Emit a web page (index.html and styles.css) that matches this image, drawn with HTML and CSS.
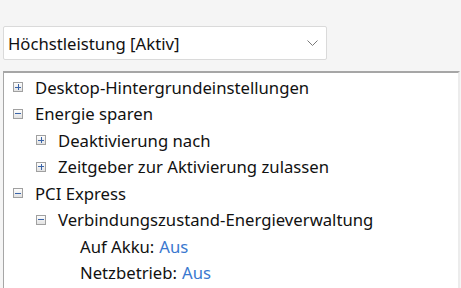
FILE: index.html
```html
<!DOCTYPE html>
<html lang="de">
<head>
    <meta charset="UTF-8">
    <title>Energieoptionen</title>
    <link rel="stylesheet" href="styles.css">
</head>
<body>
    <div class="plan-select">
        <span class="plan-name">Höchstleistung [Aktiv]</span>
        <svg class="chevron" width="11" height="7" viewBox="0 0 11 7">
            <path d="M0.5 0.5 L5.5 5.5 L10.5 0.5" fill="none" stroke="#7a7a7a" stroke-width="1"/>
        </svg>
    </div>

    <div class="tree">
        <div class="node">
            <span class="toggle plus"></span>
            <span class="label">Desktop-Hintergrundeinstellungen</span>
        </div>
        <div class="node">
            <span class="toggle minus"></span>
            <span class="label">Energie sparen</span>
        </div>
        <div class="node level-2">
            <span class="toggle plus"></span>
            <span class="label">Deaktivierung nach</span>
        </div>
        <div class="node level-2">
            <span class="toggle plus"></span>
            <span class="label">Zeitgeber zur Aktivierung zulassen</span>
        </div>
        <div class="node">
            <span class="toggle minus"></span>
            <span class="label">PCI Express</span>
        </div>
        <div class="node level-2">
            <span class="toggle minus"></span>
            <span class="label">Verbindungszustand-Energieverwaltung</span>
        </div>
        <div class="node leaf">
            <span class="label">Auf Akku:</span>
            <span class="value">Aus</span>
        </div>
        <div class="node leaf">
            <span class="label">Netzbetrieb:</span>
            <span class="value">Aus</span>
        </div>
    </div>
</body>
</html>
```

FILE: styles.css
```css
body {
    margin: 0;
    background-color: #f5f5f5;
    font-family: "Noto Sans", Arial, sans-serif;
    font-size: 16.7px;
    color: #111;
    overflow: hidden;
}
.plan-select {
    display: flex;
    align-items: center;
    justify-content: space-between;
    box-sizing: border-box;
    width: 324px;
    height: 34px;
    margin: 26px 0 0 3px;
    padding: 0 8px 0 4px;
    background-color: white;
    border: 1px solid #dadada;
    border-radius: 2px;
}
.chevron {
    margin-top: 1px;
}
.tree {
    box-sizing: border-box;
    width: 457px;
    height: 240px;
    margin: 11px 0 0 3px;
    padding-top: 1px;
    background-color: white;
    border-top: 2px solid #a6a6a6;
    border-left: 1px solid #a6a6a6;
    border-right: 2px solid #ececec;
}
.node {
    display: flex;
    align-items: center;
    height: 26.5px;
    padding-left: 9px;
}
.node.level-2 {
    padding-left: 32px;
}
.node.leaf {
    padding-left: 76px;
}
.toggle {
    position: relative;
    box-sizing: border-box;
    width: 10px;
    height: 10px;
    margin-right: 12px;
    border: 1px solid #a0a0a0;
    background: linear-gradient(#fdfdfd, #e2e2e2);
}
.toggle::before,
.toggle.plus::after {
    content: "";
    position: absolute;
    background-color: #3a64a8;
}
.toggle::before {
    left: 1px;
    top: 3.5px;
    width: 6px;
    height: 1px;
}
.toggle.plus::after {
    left: 3.5px;
    top: 1px;
    width: 1px;
    height: 6px;
}
.value {
    margin-left: 5px;
    color: #3a78cf;
}
```
